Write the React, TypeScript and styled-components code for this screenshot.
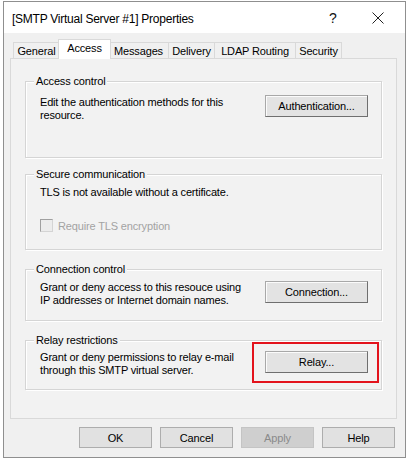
import React from 'react';
import styled, { createGlobalStyle } from 'styled-components';

const Global = createGlobalStyle`
  html, body { margin: 0; padding: 0; background: #ffffff; }
  body { font-family: "Liberation Sans", Arial, sans-serif; color: #000; }
  * { box-sizing: border-box; }
`;

const Window = styled.div`
  margin: 1px 0 0 3px;
  width: 403px;
  height: 457px;
  border: 1px solid #8f8f8f;
  background: #f0f0f0;
  display: flex;
  flex-direction: column;
`;

const TitleBar = styled.div`
  height: 31px;
  background: #ffffff;
  display: flex;
  align-items: center;
  padding-left: 8px;
  flex-shrink: 0;
`;

const Title = styled.div`
  flex: 1;
  font-size: 12px;
  letter-spacing: -0.25px;
  padding-top: 2px;
`;

const Help = styled.span`
  font-size: 14px;
  width: 14px;
  text-align: center;
  margin-right: 32px;
  color: #111;
`;

const CloseBox = styled.span`
  display: flex;
  width: 12px;
  margin-right: 21px;
`;

const Body = styled.div`
  flex: 1;
  display: flex;
  flex-direction: column;
  padding: 6px 8px 0 6px;
`;

const TabStrip = styled.div`
  display: flex;
  align-items: flex-end;
  height: 20px;
  padding-left: 3px;
  margin-bottom: -1px;
  position: relative;
  z-index: 1;
`;

const Tab = styled.div<{ $active?: boolean; $w: number }>`
  width: ${p => p.$w}px;
  height: ${p => (p.$active ? 20 : 17)}px;
  margin: 0 ${p => (p.$active ? -2 : 0)}px;
  border: 1px solid #d9d9d9;
  border-bottom: ${p => (p.$active ? 'none' : '1px solid #d9d9d9')};
  margin-left: ${p => (p.$active ? -2 : -1)}px;
  background: ${p => (p.$active ? '#ffffff' : '#f0f0f0')};
  font-size: 11px;
  letter-spacing: -0.15px;
  display: flex;
  justify-content: center;
  align-items: ${p => (p.$active ? 'flex-start' : 'center')};
  padding-top: ${p => (p.$active ? 2 : 1)}px;
  position: relative;
  z-index: ${p => (p.$active ? 2 : 1)};
  &:first-child { margin-left: 0; }
`;

const Panel = styled.div`
  height: 361px;
  border: 1px solid #d9d9d9;
  background: #f2f2f2;
  display: flex;
  flex-direction: column;
  padding: 0 14px;
`;

const Group = styled.div<{ $h: number; $mt: number; $pt: number }>`
  position: relative;
  height: ${p => p.$h}px;
  margin-top: ${p => p.$mt}px;
  border: 1px solid #d5d5d5;
  box-shadow: inset 1px 1px 0 #ffffff, 1px 1px 0 #ffffff;
  padding: ${p => p.$pt}px 13px 0 14px;
  flex-shrink: 0;
`;

const Legend = styled.span`
  position: absolute;
  top: -8px;
  left: 8px;
  padding: 0 2px;
  background: #f2f2f2;
  font-size: 11px;
  letter-spacing: -0.15px;
  line-height: 14px;
`;

const Row = styled.div`
  display: flex;
  justify-content: space-between;
  align-items: flex-start;
`;

const Text = styled.div<{ $mt?: number }>`
  font-size: 11px;
  letter-spacing: -0.18px;
  line-height: 13px;
  margin-top: ${p => p.$mt ?? 0}px;
`;

const Button = styled.button<{ $w?: number }>`
  width: ${p => p.$w ?? 103}px;
  height: 22px;
  background: #e3e3e3;
  border: 1px solid #a8a8a8;
  border-right-color: #6f6f6f;
  border-bottom-color: #6f6f6f;
  box-shadow: inset 1px 1px 0 #fbfbfb;
  font-family: "Liberation Sans", Arial, sans-serif;
  font-size: 11px;
  letter-spacing: -0.15px;
  color: #000;
  padding: 0;
  flex-shrink: 0;
`;

const Highlight = styled.div`
  position: relative;
  flex-shrink: 0;
  &::after {
    content: '';
    position: absolute;
    left: -13px;
    right: -11px;
    top: -9px;
    bottom: -10px;
    border: 2px solid #e3131c;
    pointer-events: none;
  }
`;

const CheckRow = styled.div`
  display: flex;
  align-items: center;
  margin-top: 20px;
  gap: 5px;
`;

const Check = styled.span`
  width: 13px;
  height: 13px;
  border: 1px solid #d4d4d4;
  border-top-color: #a0a0a0;
  border-left-color: #a0a0a0;
  background: #ececec;
`;

const CheckLabel = styled.span`
  font-size: 11px;
  letter-spacing: -0.15px;
  color: #a3a3a3;
`;

const Footer = styled.div`
  display: flex;
  justify-content: flex-end;
  gap: 8px;
  padding: 8px 2px 0 0;
`;

const DialogButton = styled.button<{ $disabled?: boolean }>`
  width: 73px;
  height: 21px;
  background: ${p => (p.$disabled ? '#cfcfcf' : '#e1e1e1')};
  border: 1px solid ${p => (p.$disabled ? '#c4c4c4' : '#adadad')};
  font-family: "Liberation Sans", Arial, sans-serif;
  font-size: 11px;
  letter-spacing: -0.15px;
  color: ${p => (p.$disabled ? '#8a8a8a' : '#000')};
  padding: 0;
`;

export default function App() {
  return (
    <>
      <Global />
      <Window>
        <TitleBar>
          <Title>[SMTP Virtual Server #1] Properties</Title>
          <Help>?</Help>
          <CloseBox>
            <svg width="12" height="12" viewBox="0 0 12 12">
              <path d="M0.5 0.5 L11.5 11.5 M11.5 0.5 L0.5 11.5" stroke="#222" strokeWidth="1" fill="none" />
            </svg>
          </CloseBox>
        </TitleBar>
        <Body>
          <TabStrip>
            <Tab $w={47}>General</Tab>
            <Tab $w={53} $active>Access</Tab>
            <Tab $w={61}>Messages</Tab>
            <Tab $w={47}>Delivery</Tab>
            <Tab $w={82}>LDAP Routing</Tab>
            <Tab $w={47}>Security</Tab>
          </TabStrip>
          <Panel>
            <Group $h={77} $mt={22} $pt={13}>
              <Legend>Access control</Legend>
              <Row>
                <Text $mt={1}>Edit the authentication methods for this<br />resource.</Text>
                <Button>Authentication...</Button>
              </Row>
            </Group>
            <Group $h={76} $mt={16} $pt={11}>
              <Legend>Secure communication</Legend>
              <Text>TLS is not available without a certificate.</Text>
              <CheckRow>
                <Check />
                <CheckLabel>Require TLS encryption</CheckLabel>
              </CheckRow>
            </Group>
            <Group $h={52} $mt={19} $pt={11}>
              <Legend>Connection control</Legend>
              <Row>
                <Text>Grant or deny access to this resouce using<br />IP addresses or Internet domain names.</Text>
                <Button>Connection...</Button>
              </Row>
            </Group>
            <Group $h={50} $mt={19} $pt={10}>
              <Legend>Relay restrictions</Legend>
              <Row>
                <Text>Grant or deny permissions to relay e-mail<br />through this SMTP virtual server.</Text>
                <Highlight>
                  <Button>Relay...</Button>
                </Highlight>
              </Row>
            </Group>
          </Panel>
          <Footer>
            <DialogButton>OK</DialogButton>
            <DialogButton>Cancel</DialogButton>
            <DialogButton $disabled>Apply</DialogButton>
            <DialogButton>Help</DialogButton>
          </Footer>
        </Body>
      </Window>
    </>
  );
}
